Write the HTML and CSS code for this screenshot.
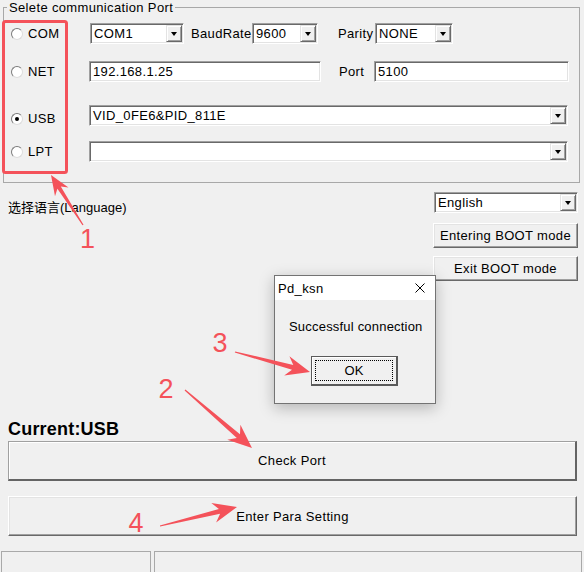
FILE: index.html
```html
<!DOCTYPE html>
<html lang="en">
<head>
    <meta charset="UTF-8">
    <meta name="viewport" content="width=device-width, initial-scale=1.0">
    <title>Pd_ksn</title>
    <link rel="stylesheet" href="styles.css">
</head>
<body>
    <div class="window">
        <fieldset class="group">
            <legend>Selete communication Port</legend>

            <div class="port-row row-com">
                <label class="radio-cell"><span class="radio"></span>COM</label>
                <div class="combo w-com"><span class="combo-text">COM1</span><span class="combo-btn"></span></div>
                <span class="field-label lbl-baud">BaudRate</span>
                <div class="combo w-baud"><span class="combo-text">9600</span><span class="combo-btn"></span></div>
                <span class="field-label lbl-parity">Parity</span>
                <div class="combo w-parity"><span class="combo-text">NONE</span><span class="combo-btn"></span></div>
            </div>

            <div class="port-row row-net">
                <label class="radio-cell"><span class="radio"></span>NET</label>
                <div class="textbox w-ip">192.168.1.25</div>
                <span class="field-label lbl-port">Port</span>
                <div class="textbox w-port">5100</div>
            </div>

            <div class="port-row row-usb">
                <label class="radio-cell"><span class="radio checked"></span>USB</label>
                <div class="combo w-full"><span class="combo-text">VID_0FE6&amp;PID_811E</span><span class="combo-btn"></span></div>
            </div>

            <div class="port-row row-lpt">
                <label class="radio-cell"><span class="radio"></span>LPT</label>
                <div class="combo w-full"><span class="combo-text"></span><span class="combo-btn"></span></div>
            </div>
        </fieldset>

        <div class="lang-row">
            <span class="lang-label">选择语言(Language)</span>
            <div class="boot-col">
                <div class="combo w-lang"><span class="combo-text">English</span><span class="combo-btn"></span></div>
                <button class="btn btn-boot">Entering BOOT mode</button>
                <button class="btn btn-boot btn-exit">Exit BOOT mode</button>
            </div>
        </div>

        <div class="bottom">
            <div class="current">Current:USB</div>
            <button class="btn btn-wide btn-default">Check Port</button>
            <button class="btn btn-wide btn-para">Enter Para Setting</button>
            <div class="statusbar">
                <span class="panel panel-left"></span>
                <span class="panel panel-right"></span>
            </div>
        </div>

        <!-- message box on top of the main window -->
        <div class="msgbox">
            <div class="msg-title">
                <span>Pd_ksn</span>
                <svg class="msg-close" width="10" height="10" viewBox="0 0 10 10">
                    <path d="M0.5 0.5 L9.5 9.5 M9.5 0.5 L0.5 9.5" stroke="#000" stroke-width="1" fill="none"/>
                </svg>
            </div>
            <div class="msg-body">
                <div class="msg-text">Successful connection</div>
                <button class="btn-ok">OK</button>
            </div>
        </div>

        <!-- red markup drawn over the screenshot -->
        <svg class="annotations" width="584" height="572" viewBox="0 0 584 572">
            <rect x="3.5" y="21.5" width="63" height="151" rx="2" fill="none" stroke="#f4525a" stroke-width="3"/>
            <polygon points="83.5,224.7 60.8,186.6 68.5,187.5 51,175 55,196.2 57.4,188.7 82.5,225.3" fill="#f4525a"/>
            <polygon points="184.6,390.5 236.8,438.1 227.3,439.8 252,448 240.4,424.7 240,434.3 185.4,389.5" fill="#f4525a"/>
            <polygon points="234.8,352.6 292,369.8 284.2,375.5 310,372 289.4,356.2 293.3,364.9 235.2,351.4" fill="#f4525a"/>
            <polygon points="160.1,526.6 220.1,513.8 216.1,522.5 237,507 211.3,503.1 218.9,508.9 159.9,525.4" fill="#f4525a"/>
            <text x="87.5" y="248" class="mark">1</text>
            <text x="166" y="398" class="mark">2</text>
            <text x="220" y="352" class="mark">3</text>
            <text x="136" y="532" class="mark">4</text>
        </svg>
    </div>
</body>
</html>
```

FILE: styles.css
```css
html, body {
    margin: 0;
    height: 100%;
}
body {
    font-family: "Liberation Sans", Arial, "Noto Sans CJK SC", sans-serif;
    font-size: 13px;
    letter-spacing: 0.35px;
    color: #000;
    background-color: #f0f0f0;
}
.window {
    position: relative;
    width: 584px;
    height: 572px;
    display: flex;
    flex-direction: column;
    background-color: #f0f0f0;
    overflow: hidden;
}

/* group box */
.group {
    margin: 0 4px 0 3px;
    padding: 0 0 20px 0;
    border: 1px solid #a8a8a8;
    min-width: 0;
}
.group legend {
    margin-left: 3px;
    padding: 0 2px;
    line-height: 15px;
}
.port-row {
    display: flex;
    align-items: center;
    height: 21px;
}
.row-com { margin-top: 8px; }
.row-net { margin-top: 17px; }
.row-usb { margin-top: 23px; }
.row-lpt { margin-top: 15px; }
.row-usb .radio-cell { margin-top: 6px; }
.radio-cell {
    display: flex;
    align-items: center;
    width: 78px;
    padding-left: 7px;
}
.radio {
    width: 10px;
    height: 10px;
    margin-right: 5px;
    border: 1px solid;
    border-color: #7a7a7a #dcdcdc #dcdcdc #7a7a7a;
    border-radius: 50%;
    background: #fff;
    display: flex;
    align-items: center;
    justify-content: center;
}
.radio.checked::after {
    content: "";
    width: 4px;
    height: 4px;
    border-radius: 50%;
    background: #000;
}
.field-label {
    display: block;
}
.lbl-baud { margin-left: 7px; width: 61px; }
.lbl-parity { margin-left: 20px; width: 37px; }
.lbl-port { margin-left: 18px; width: 35px; }

/* combo boxes and edit boxes */
.combo, .textbox {
    box-sizing: border-box;
    height: 21px;
    border: 1px solid;
    border-color: #a0a0a0 #fff #fff #a0a0a0;
    box-shadow: inset 1px 1px #696969, inset -1px -1px #e3e3e3;
    background: #fff;
}
.combo {
    display: flex;
}
.combo-text {
    flex: 1;
    padding: 1px 0 0 3px;
    line-height: 17px;
    white-space: nowrap;
    overflow: hidden;
}
.combo-btn {
    box-sizing: border-box;
    width: 16px;
    margin: 1px 1px 1px 0;
    background: #f0f0f0;
    border: 1px solid;
    border-color: #e3e3e3 #696969 #696969 #e3e3e3;
    box-shadow: inset 1px 1px #fff, inset -1px -1px #a0a0a0;
    display: flex;
    align-items: center;
    justify-content: center;
}
.combo-btn::after {
    content: "";
    width: 0;
    height: 0;
    border-top: 4px solid #000;
    border-left: 3.5px solid transparent;
    border-right: 3.5px solid transparent;
}
.textbox {
    padding: 1px 0 0 3px;
    line-height: 17px;
}
.w-com { width: 94px; margin-left: 1px; }
.w-baud { width: 66px; }
.w-parity { width: 78px; }
.w-ip { width: 232px; }
.w-port { width: 195px; }
.w-full { width: 479px; }
.w-lang { width: 144px; margin-left: 1px; }

/* language + boot buttons */
.lang-row {
    display: flex;
    justify-content: space-between;
    margin-top: 9px;
    padding: 0 6px 0 8px;
}
.lang-label {
    margin-top: 8px;
    line-height: 16px;
    letter-spacing: 0;
}
.boot-col {
    width: 145px;
    display: flex;
    flex-direction: column;
}
.btn {
    box-sizing: border-box;
    margin: 0;
    padding: 0;
    font: inherit;
    letter-spacing: inherit;
    color: #000;
    background: #f0f0f0;
    border: 1px solid;
    border-color: #fff #696969 #696969 #fff;
    box-shadow: inset -1px -1px #a0a0a0, inset 1px 1px #e3e3e3;
}
.btn-boot {
    height: 25px;
    margin-top: 10px;
}
.btn-exit {
    margin-top: 8px;
}

/* bottom part */
.bottom {
    margin-top: auto;
    display: flex;
    flex-direction: column;
}
.current {
    margin-left: 8px;
    font-size: 18px;
    font-weight: bold;
    line-height: 20px;
    letter-spacing: 0.2px;
}
.btn-wide {
    height: 40px;
    margin: 2px 7px 0 8px;
}
.btn-default {
    border-color: #a0a0a0 #646464 #646464 #a0a0a0;
    border-width: 1px 2px 2px 1px;
    box-shadow: inset 1px 1px #fff;
}
.btn-para {
    margin-top: 15px;
}
.statusbar {
    display: flex;
    gap: 3px;
    height: 21px;
    margin-top: 15px;
    padding: 0 2px 0 1px;
}
.panel {
    box-sizing: border-box;
    border: 1px solid #a9a9a9;
    border-bottom: none;
}
.panel-left { width: 150px; }
.panel-right { flex: 1; }

/* message box */
.msgbox {
    position: absolute;
    left: 274px;
    top: 275px;
    width: 160px;
    height: 127px;
    border: 1px solid #737373;
    background: #f0f0f0;
    box-shadow: 0 4px 14px rgba(0, 0, 0, 0.25);
    z-index: 5;
}
.msg-title {
    display: flex;
    align-items: center;
    justify-content: space-between;
    height: 24px;
    padding: 0 10px 0 3px;
    background: #fff;
}
.msg-close {
    display: block;
}
.msg-body {
    padding: 19px 0 0 14px;
}
.msg-text {
    line-height: 16px;
    letter-spacing: 0.2px;
}
.btn-ok {
    position: relative;
    box-sizing: border-box;
    width: 87px;
    height: 30px;
    margin: 21px 0 0 22px;
    padding: 0;
    font: inherit;
    color: #000;
    background: #f0f0f0;
    border: 1px solid #5a5a5a;
    border-width: 1px 2px 2px 1px;
    box-shadow: inset 1px 1px #fff;
}
.btn-ok::after {
    content: "";
    position: absolute;
    top: 3px;
    left: 3px;
    right: 3px;
    bottom: 3px;
    border: 1px dotted #000;
}

/* red markup */
.annotations {
    position: absolute;
    left: 0;
    top: 0;
    z-index: 10;
    pointer-events: none;
}
.mark {
    font-family: "Liberation Sans", Arial, sans-serif;
    font-size: 27px;
    letter-spacing: 0;
    fill: #f4525a;
    text-anchor: middle;
}
```
